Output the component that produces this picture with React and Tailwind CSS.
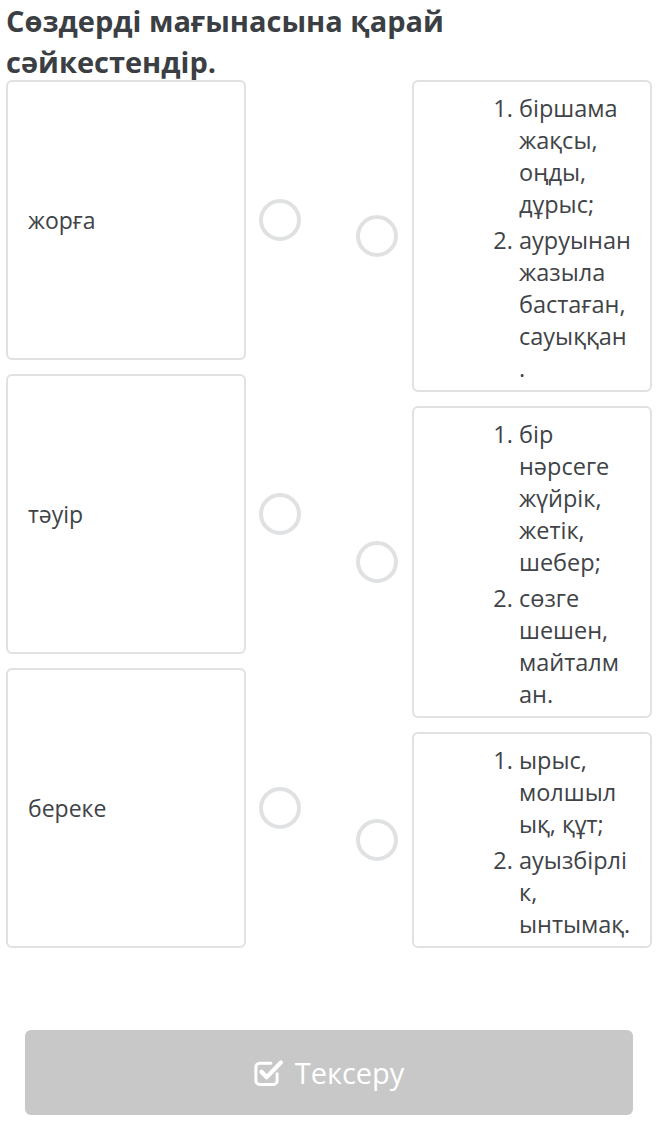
import React from 'react';

const leftItems = ['жорға', 'тәуір', 'береке'];

// each list item is given as its wrapped lines, as shown on screen
const rightItems = [
  [
    ['біршама', 'жақсы,', 'оңды,', 'дұрыс;'],
    ['ауруынан', 'жазыла', 'бастаған,', 'сауыққан', '.'],
  ],
  [
    ['бір', 'нәрсеге', 'жүйрік,', 'жетік,', 'шебер;'],
    ['сөзге', 'шешен,', 'майталм', 'ан.'],
  ],
  [
    ['ырыс,', 'молшыл', 'ық, құт;'],
    ['ауызбірлі', 'к,', 'ынтымақ.'],
  ],
];

const Dot = () => (
  <div className="w-[42px] h-[42px] shrink-0 rounded-full border-[4px] border-[#dfe1e3] bg-white" />
);

const CheckIcon = () => (
  <svg width="30" height="29" viewBox="0 0 24 23" fill="none" className="shrink-0">
    <path
      d="M18.5 12.5v5.5a3 3 0 0 1-3 3H4.5a3 3 0 0 1-3-3V7a3 3 0 0 1 3-3h9"
      stroke="white"
      strokeWidth="2.4"
      strokeLinecap="round"
    />
    <path d="M6 11l4.2 4.2L21.5 3.5" stroke="white" strokeWidth="3.4" strokeLinecap="round" strokeLinejoin="round" />
  </svg>
);

export default function App() {
  return (
    <div className="min-h-[1132px] bg-white pl-[6px] pr-[18px] text-[#404347]" style={{ fontFamily: '"Open Sans", "Noto Sans", sans-serif' }}>
      {/* Title */}
      <h1 className="text-[29px] leading-[41px] font-bold text-[#3b3f44] h-[80px]">
        Сөздерді мағынасына қарай сәйкестендір.
      </h1>

      {/* Matching board */}
      <div className="flex items-stretch">
        <div className="flex flex-col gap-[14px] w-[295px]">
          {leftItems.map((word) => (
            <div key={word} className="flex-1 flex items-center gap-[13px]">
              <div className="w-[240px] self-stretch flex items-center rounded-[6px] border-2 border-[#e1e1e1] px-[20px] text-[23px]">
                {word}
              </div>
              <Dot />
            </div>
          ))}
        </div>

        <div className="flex flex-col gap-[14px] ml-[55px]">
          {rightItems.map((list, i) => (
            <div key={i} className="flex items-center gap-[14px]">
              <Dot />
              <div className="w-[240px] rounded-[6px] border-2 border-[#e1e1e1] pt-[10px] pb-[6px] pl-[105px] pr-[10px]">
                <ol className="list-decimal text-[23.5px] leading-[32px] space-y-[4px] whitespace-nowrap">
                  {list.map((lines, j) => (
                    <li key={j}>
                      {lines.map((line, k) => (
                        <React.Fragment key={k}>
                          {k > 0 && <br />}
                          {line}
                        </React.Fragment>
                      ))}
                    </li>
                  ))}
                </ol>
              </div>
            </div>
          ))}
        </div>
      </div>

      {/* Check button */}
      <div className="mx-[19px] mt-[82px]">
        <button className="w-full h-[85px] rounded-[6px] bg-[#c8c8c8] flex items-center justify-center gap-[11px] text-white text-[29px]">
          <CheckIcon />
          <span>Тексеру</span>
        </button>
      </div>
    </div>
  );
}
